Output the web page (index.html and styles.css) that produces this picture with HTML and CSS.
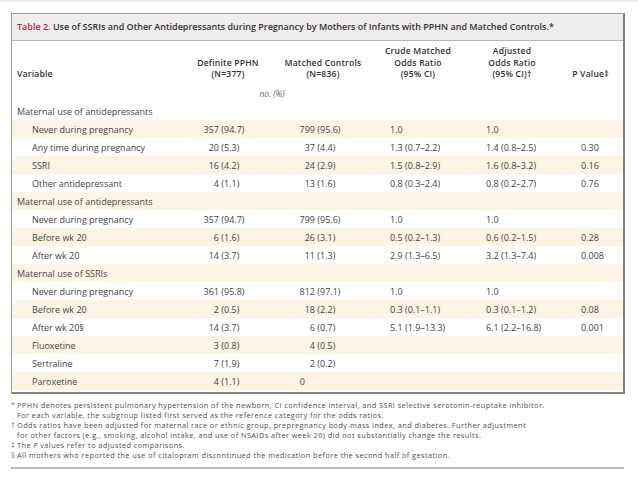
FILE: index.html
```html
<!DOCTYPE html>
<html lang="en">
<head>
<meta charset="utf-8">
<title>Table 2</title>
<link rel="stylesheet" href="styles.css">
</head>
<body>
<div class="page">
  <div class="box">
    <div class="title"><span class="tnum">Table 2.</span> Use of SSRIs and Other Antidepressants during Pregnancy by Mothers of Infants with PPHN and Matched Controls.*</div>
    <table class="tbl">
      <colgroup>
        <col class="c1"><col class="c2"><col class="c3"><col class="c4"><col class="c5"><col class="c6">
      </colgroup>
      <thead>
        <tr class="hd">
          <th class="hl">Variable</th>
          <th>Definite PPHN<br>(N=377)</th>
          <th>Matched Controls<br>(N=836)</th>
          <th>Crude Matched<br>Odds Ratio<br>(95% CI)</th>
          <th>Adjusted<br>Odds Ratio<br>(95% CI)†</th>
          <th>P Value‡</th>
        </tr>
        <tr class="unit">
          <th></th>
          <th colspan="2" class="uc">no. (%)</th>
          <th></th><th></th><th></th>
        </tr>
      </thead>
      <tbody>
        <tr><td class="grp">Maternal use of antidepressants</td><td></td><td></td><td></td><td></td><td></td></tr>
        <tr><td class="sub">Never during pregnancy</td><td><span class="n">357</span> (94.7)</td><td><span class="n">799</span> (95.6)</td><td class="o">1.0</td><td class="o">1.0</td><td class="o"></td></tr>
        <tr><td class="sub">Any time during pregnancy</td><td><span class="n">20</span> (5.3)</td><td><span class="n">37</span> (4.4)</td><td class="o">1.3 (0.7–2.2)</td><td class="o">1.4 (0.8–2.5)</td><td class="o">0.30</td></tr>
        <tr><td class="sub">SSRI</td><td><span class="n">16</span> (4.2)</td><td><span class="n">24</span> (2.9)</td><td class="o">1.5 (0.8–2.9)</td><td class="o">1.6 (0.8–3.2)</td><td class="o">0.16</td></tr>
        <tr><td class="sub">Other antidepressant</td><td><span class="n">4</span> (1.1)</td><td><span class="n">13</span> (1.6)</td><td class="o">0.8 (0.3–2.4)</td><td class="o">0.8 (0.2–2.7)</td><td class="o">0.76</td></tr>
        <tr><td class="grp">Maternal use of antidepressants</td><td></td><td></td><td></td><td></td><td></td></tr>
        <tr><td class="sub">Never during pregnancy</td><td><span class="n">357</span> (94.7)</td><td><span class="n">799</span> (95.6)</td><td class="o">1.0</td><td class="o">1.0</td><td class="o"></td></tr>
        <tr><td class="sub">Before wk 20</td><td><span class="n">6</span> (1.6)</td><td><span class="n">26</span> (3.1)</td><td class="o">0.5 (0.2–1.3)</td><td class="o">0.6 (0.2–1.5)</td><td class="o">0.28</td></tr>
        <tr><td class="sub">After wk 20</td><td><span class="n">14</span> (3.7)</td><td><span class="n">11</span> (1.3)</td><td class="o">2.9 (1.3–6.5)</td><td class="o">3.2 (1.3–7.4)</td><td class="o">0.008</td></tr>
        <tr><td class="grp">Maternal use of SSRIs</td><td></td><td></td><td></td><td></td><td></td></tr>
        <tr><td class="sub">Never during pregnancy</td><td><span class="n">361</span> (95.8)</td><td><span class="n">812</span> (97.1)</td><td class="o">1.0</td><td class="o">1.0</td><td class="o"></td></tr>
        <tr><td class="sub">Before wk 20</td><td><span class="n">2</span> (0.5)</td><td><span class="n">18</span> (2.2)</td><td class="o">0.3 (0.1–1.1)</td><td class="o">0.3 (0.1–1.2)</td><td class="o">0.08</td></tr>
        <tr><td class="sub">After wk 20§</td><td><span class="n">14</span> (3.7)</td><td><span class="n">6</span> (0.7)</td><td class="o">5.1 (1.9–13.3)</td><td class="o">6.1 (2.2–16.8)</td><td class="o">0.001</td></tr>
        <tr><td class="sub">Fluoxetine</td><td><span class="n">3</span> (0.8)</td><td><span class="n">4</span> (0.5)</td><td class="o"></td><td class="o"></td><td class="o"></td></tr>
        <tr><td class="sub">Sertraline</td><td><span class="n">7</span> (1.9)</td><td><span class="n">2</span> (0.2)</td><td class="o"></td><td class="o"></td><td class="o"></td></tr>
        <tr><td class="sub">Paroxetine</td><td><span class="n">4</span> (1.1)</td><td><span class="n zero">0</span></td><td class="o"></td><td class="o"></td><td class="o"></td></tr>
      </tbody>
    </table>
  </div>
  <div class="notes">
    <p><span class="mk">*</span>PPHN denotes persistent pulmonary hypertension of the newborn, CI confidence interval, and SSRI selective serotonin-reuptake inhibitor.<br>For each variable, the subgroup listed first served as the reference category for the odds ratios.</p>
    <p><span class="mk">†</span>Odds ratios have been adjusted for maternal race or ethnic group, prepregnancy body-mass index, and diabetes. Further adjustment<br>for other factors (e.g., smoking, alcohol intake, and use of NSAIDs after week 20) did not substantially change the results.</p>
    <p><span class="mk">‡</span>The <i>P</i> values refer to adjusted comparisons.</p>
    <p><span class="mk">§</span>All mothers who reported the use of citalopram discontinued the medication before the second half of gestation.</p>
  </div>
  <div class="rule"></div>
</div>
</body>
</html>
```
FILE: styles.css
```css
html, body {
  margin: 0;
  padding: 0;
  background: #ffffff;
}
body {
  font-family: "Open Sans", "DejaVu Sans", sans-serif;
  color: #3a3a3a;
  width: 638px;
  height: 479px;
  overflow: hidden;
  border-top: 2px solid #ececec;
  box-sizing: border-box;
}
.page {
  padding: 11px 0 0 11px;
  width: 614px;
}
.box {
  border: 1px solid #9a9a9a;
  border-right: 2px solid #808080;
  border-bottom: 2px solid #858585;
  background: #ffffff;
}
.title {
  background: #efeeeb;
  height: 26px;
  line-height: 26px;
  border-bottom: 1px solid #b9b7b3;
  padding-left: 5px;
  font-size: 9px;
  font-weight: 600;
  color: #333333;
  white-space: nowrap;
}
.tnum {
  color: #b0283f;
}
.tbl {
  width: 100%;
  table-layout: fixed;
  border-collapse: collapse;
  font-size: 9px;
  margin-bottom: 2px;
}
.c1 { width: 168px; }
.c2 { width: 96px; }
.c3 { width: 94px; }
.c4 { width: 96px; }
.c5 { width: 92px; }
.c6 { width: auto; }
.hd th {
  font-weight: 600;
  color: #333333;
  line-height: 11.7px;
  vertical-align: bottom;
  text-align: center;
  padding: 5px 0 3px 0;
  font-size: 8.6px;
  letter-spacing: 0.2px;
}
.hd th.hl {
  text-align: left;
  padding-left: 5px;
}
.unit th {
  height: 18px;
  padding: 0;
  font-weight: 400;
}
.unit th.uc {
  font-style: italic;
  font-size: 8.3px;
  color: #6a6a6a;
  text-align: center;
  vertical-align: middle;
  padding-right: 6px;
}
tbody tr {
  height: 18px;
}
tbody tr:nth-child(even) {
  background: #fdf4e3;
}
tbody td {
  padding: 0;
  white-space: nowrap;
  color: #444444;
  vertical-align: middle;
}
td.grp {
  padding-left: 5px;
}
td.sub {
  padding-left: 20px;
}
.n {
  display: inline-block;
  width: 39px;
  text-align: right;
}
.n.zero {
  width: 29px;
}
td.o {
  padding-left: 20px;
}
tbody td:nth-child(6) {
  padding-left: 23px;
}
.notes {
  margin-top: 6px;
  font-size: 7.3px;
  letter-spacing: 0.45px;
  line-height: 10px;
  color: #4e4e4e;
}
.notes p {
  margin: 0;
  padding-left: 6px;
  text-indent: -6px;
  width: 610px;
  white-space: nowrap;
}
.mk {
  display: inline-block;
  width: 6px;
  text-indent: 0;
  color: #777777;
}
.rule {
  margin-top: 7px;
  height: 0;
  border-top: 2px solid #bdbdbd;
  width: 613px;
}
```
